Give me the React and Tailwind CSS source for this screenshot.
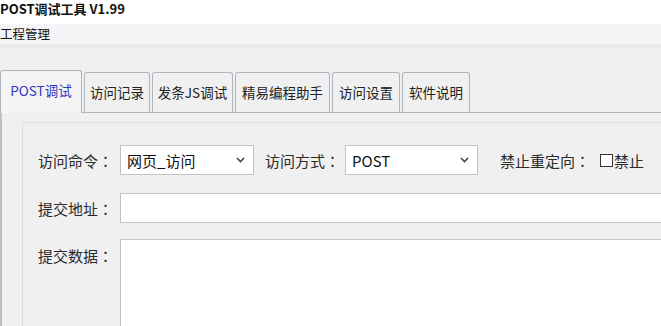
import React from 'react';

const tabs = [
  { label: 'POST调试', w: 'w-[82px]' },
  { label: '访问记录', w: 'w-[66px]' },
  { label: '发条JS调试', w: 'w-[81px]' },
  { label: '精易编程助手', w: 'w-[95px]' },
  { label: '访问设置', w: 'w-[68px]' },
  { label: '软件说明', w: 'w-[68px]' },
];

const Chevron = () => (
  <svg width="9" height="6" viewBox="0 0 9 6" className="shrink-0">
    <path d="M1 1 L4.5 4.5 L8 1" fill="none" stroke="#444" strokeWidth="1.6" />
  </svg>
);

// centered full-width colon like the original UI font
const Label = ({ text, className = '' }) => (
  <span className={className}>
    {text}
    <span style={{ fontFamily: '"Noto Sans CJK TC", sans-serif' }}>：</span>
  </span>
);

const Select = ({ value, width }) => (
  <div className={`flex items-center justify-between h-[30px] ${width} bg-white border border-[#c3c3c3] pl-[6px] pr-[8px]`}>
    <span className="text-[15px] text-[#111]">{value}</span>
    <Chevron />
  </div>
);

const App = () => {
  return (
    <div
      className="w-[661px] h-[326px] overflow-hidden bg-[#f0f0f0] text-[#2a2a2a] flex flex-col"
      style={{ fontFamily: '"Noto Sans CJK SC", "Noto Sans", sans-serif' }}
    >
      {/* title bar */}
      <div className="h-[24px] shrink-0 bg-white">
        <span className="block pt-[1px] text-[13px] leading-[16px] font-bold text-[#111]">POST调试工具 V1.99</span>
      </div>

      {/* menu */}
      <div className="h-[20px] shrink-0 bg-[#f4f5f7] flex items-center">
        <span className="text-[12.5px] leading-none text-[#111]">工程管理</span>
      </div>
      <div className="h-[4px] shrink-0 bg-[#ebebeb]" />

      {/* tabs */}
      <div className="mt-[22px] shrink-0 flex items-end gap-[2px] border-b border-[#aeb6c0] h-[43px]">
        {tabs.map((t, i) => (
          <div
            key={t.label}
            className={`${t.w} flex items-center justify-center border border-b-0 border-[#aeb6c0] rounded-t-[3px] text-[13.5px] leading-none ${
              i === 0 ? 'h-[43px] bg-[#f4f4f4] text-[#3434c4] mb-[-1px] pb-[3px]' : 'h-[40px] bg-[#f0f0f0] text-[#222]'
            }`}
          >
            {t.label}
          </div>
        ))}
      </div>

      {/* panel */}
      <div className="flex-1 border-l-2 border-[#b9c0c8] pl-[20px] pt-[9px]">
        <div className="h-full border-l border-t border-[#dedede] pl-[15px] pt-[22px] text-[15px] leading-none">
          <div className="flex items-center h-[30px]">
            <Label text="访问命令" className="w-[82px]" />
            <Select value="网页_访问" width="w-[134px]" />
            <Label text="访问方式" className="ml-[11px] w-[80px]" />
            <Select value="POST" width="w-[133px]" />
            <Label text="禁止重定向" className="ml-[22px]" />
            <span className="ml-[10px] w-[13px] h-[13px] border border-[#333] bg-white" />
            <span className="ml-[1px]">禁止</span>
          </div>

          <div className="flex items-center h-[30px] mt-[18px]">
            <Label text="提交地址" className="w-[82px]" />
            <div className="flex-1 h-[30px] bg-white border border-[#c3c3c3] mr-[-10px]" />
          </div>

          <div className="flex mt-[16px]">
            <Label text="提交数据" className="w-[82px] pt-[9px]" />
            <div className="flex-1 h-[120px] bg-white border border-[#c3c3c3] mr-[-10px]" />
          </div>
        </div>
      </div>
    </div>
  );
};

export default App;
